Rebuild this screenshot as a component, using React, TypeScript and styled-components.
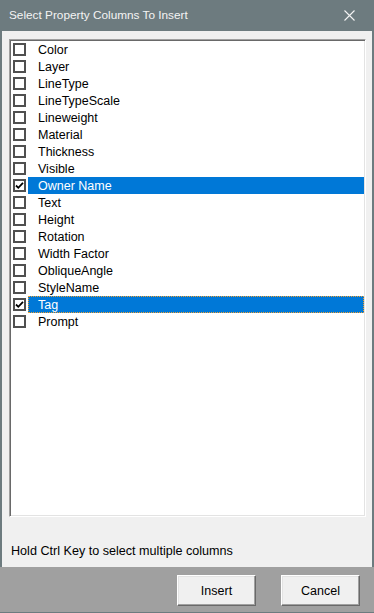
import React, { useState } from 'react';
import styled, { createGlobalStyle } from 'styled-components';

const GlobalStyle = createGlobalStyle`
  html, body {
    margin: 0;
    padding: 0;
    background: #ffffff;
  }
  body {
    font-family: "Liberation Sans", Arial, sans-serif;
  }
`;

// CSS in JS
const Window = styled.div`
  width: 374px;
  height: 613px;
  box-sizing: border-box;
  display: flex;
  flex-direction: column;
  background: #f0f0f0;
  border: 2px solid #6d7b7f;
  border-top: none;
  border-bottom-width: 1px;
`;

const TitleBar = styled.div`
  height: 31px;
  margin: 0 -2px;
  padding: 0 0 0 9px;
  display: flex;
  align-items: center;
  background: #6d7b7f;
  color: #f4f4f4;
  font-size: 11.8px;
`;

const Title = styled.span`
  flex: 1;
  padding-bottom: 1px;
`;

const CloseButton = styled.div`
  width: 46px;
  height: 31px;
  display: flex;
  align-items: center;
  justify-content: center;
  margin-right: 2px;
  svg {
    display: block;
  }
`;

const Body = styled.div`
  flex: 1;
  display: flex;
  flex-direction: column;
  padding: 8px 6px 0 7px;
`;

const ListBox = styled.ul`
  height: 478px;
  box-sizing: border-box;
  margin: 0;
  list-style: none;
  background: #ffffff;
  border-style: solid;
  border-width: 1px;
  border-color: #a0a0a0 #ffffff #ffffff #a0a0a0;
  box-shadow: inset 1px 1px 0 #696969, inset -1px -1px 0 #e3e3e3;
  padding: 1px;
`;

const Row = styled.li<{ selected: boolean }>`
  height: 17px;
  display: flex;
  align-items: center;
  padding-left: 2px;
  font-size: 12.5px;
  color: #000000;
  cursor: default;

  .label {
    height: 17px;
    flex: 1;
    display: flex;
    align-items: center;
    box-sizing: border-box;
    margin-left: 2px;
    padding-left: 10px;
    background: ${p => (p.selected ? '#0078d7' : 'transparent')};
    color: ${p => (p.selected ? '#ffffff' : '#000000')};
  }
  .focus {
    border: 1px dotted #f0a030;
    padding-left: 9px;
  }
`;

const Box = styled.span`
  width: 13px;
  height: 13px;
  box-sizing: border-box;
  flex: none;
  border: 2px solid #505050;
  background: #ffffff;
  display: flex;
  align-items: center;
  justify-content: center;
`;

const Hint = styled.div`
  height: 50px;
  box-sizing: border-box;
  display: flex;
  align-items: flex-end;
  padding: 0 0 9px 2px;
  font-size: 12.6px;
  color: #000000;
`;

const Footer = styled.div`
  height: 45px;
  box-sizing: border-box;
  margin: 0 -2px;
  padding: 8px 14px 0 0;
  display: flex;
  justify-content: flex-end;
  align-items: flex-start;
  gap: 25px;
  background: #a0a0a0;
`;

const Button = styled.button`
  width: 79px;
  height: 31px;
  margin: 0;
  padding: 0;
  background: #f0f0f0;
  border-style: solid;
  border-width: 1px;
  border-color: #ffffff #696969 #696969 #ffffff;
  box-shadow: inset -1px -1px 0 #a0a0a0, inset 1px 1px 0 #e3e3e3;
  font-family: "Liberation Sans", Arial, sans-serif;
  font-size: 12.5px;
  color: #000000;
`;

const properties = [
  'Color',
  'Layer',
  'LineType',
  'LineTypeScale',
  'Lineweight',
  'Material',
  'Thickness',
  'Visible',
  'Owner Name',
  'Text',
  'Height',
  'Rotation',
  'Width Factor',
  'ObliqueAngle',
  'StyleName',
  'Tag',
  'Prompt',
];

const Check = () => (
  <svg width="9" height="9" viewBox="0 0 9 9">
    <path d="M1 4.5 L3.3 6.8 L8 1.8" fill="none" stroke="#000" strokeWidth="1.8" />
  </svg>
);

const App = () => {
  const [selected] = useState(['Owner Name', 'Tag']);
  const focused = 'Tag';

  return (
    <>
      <GlobalStyle />
      <Window>
        <TitleBar>
          <Title>Select Property Columns To Insert</Title>
          <CloseButton>
            <svg width="11" height="11" viewBox="0 0 11 11">
              <path d="M0.5 0.5 L10.5 10.5 M10.5 0.5 L0.5 10.5" stroke="#f4f4f4" strokeWidth="1.1" />
            </svg>
          </CloseButton>
        </TitleBar>
        <Body>
          <ListBox>
            {properties.map((name, index) => {
              const isSelected = selected.includes(name);
              return (
                <Row key={index} selected={isSelected}>
                  <Box>{isSelected && <Check />}</Box>
                  <span className={name === focused ? 'label focus' : 'label'}>{name}</span>
                </Row>
              );
            })}
          </ListBox>
          <Hint>Hold Ctrl Key to select multiple columns</Hint>
        </Body>
        <Footer>
          <Button>Insert</Button>
          <Button>Cancel</Button>
        </Footer>
      </Window>
    </>
  );
};

export default App;
